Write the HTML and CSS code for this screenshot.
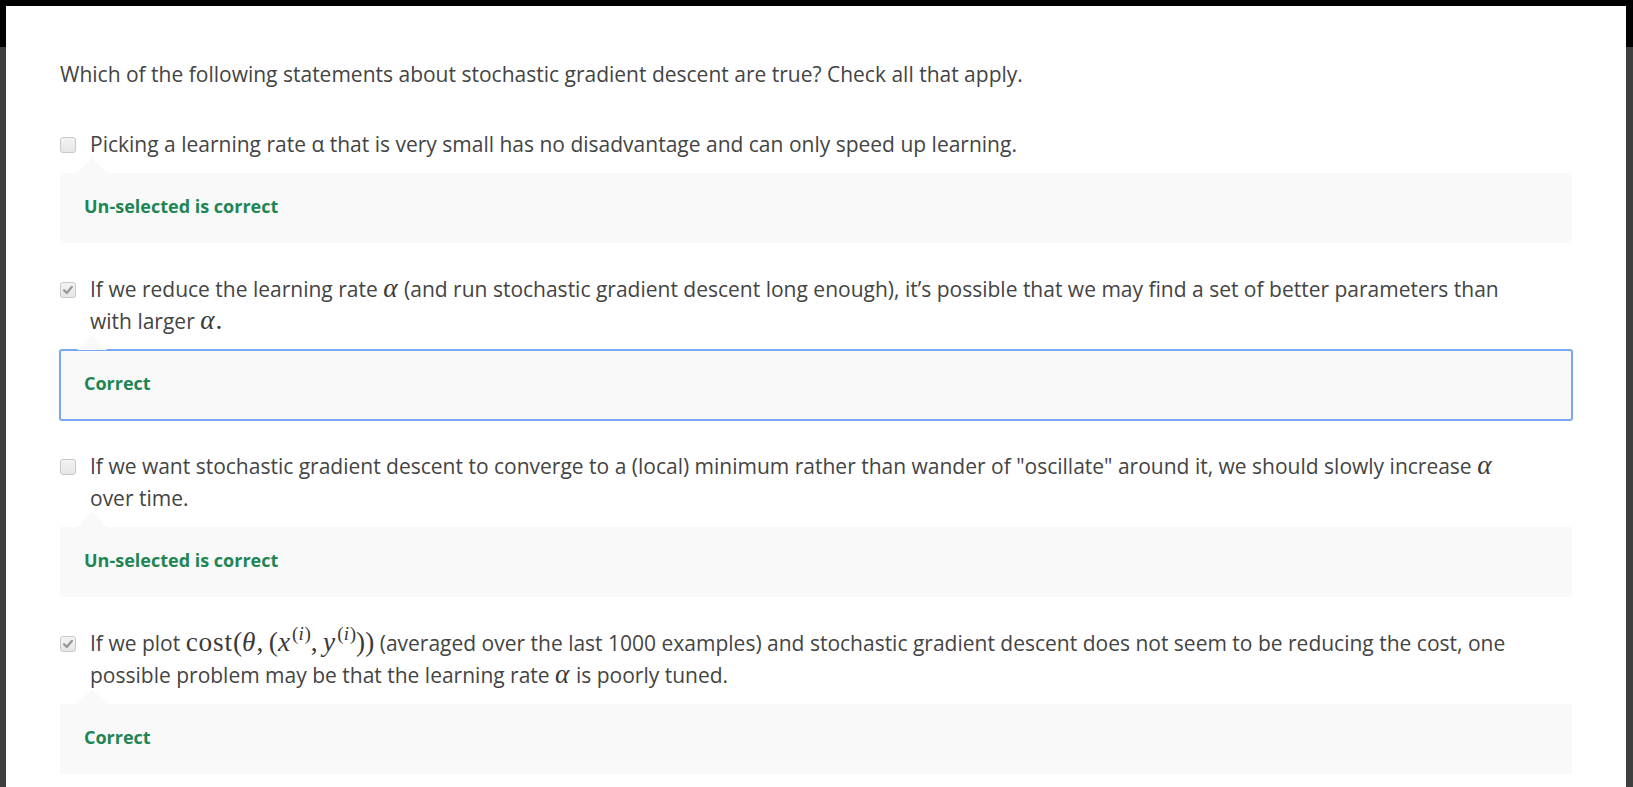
FILE: index.html
```html
<!DOCTYPE html>
<html lang="en">
<head>
<meta charset="utf-8">
<title>Quiz feedback</title>
<link rel="stylesheet" href="styles.css">
</head>
<body>
<div class="screen">
  <main class="panel">
    <p class="question">Which of the following statements about stochastic gradient descent are true? Check all that apply.</p>

    <div class="option">
      <div class="row">
        <span class="cb"></span>
        <div class="text">Picking a learning rate α that is very small has no disadvantage and can only speed up learning.</div>
      </div>
      <div class="feedback"><span class="verdict">Un-selected is correct</span></div>
    </div>

    <div class="option">
      <div class="row">
        <span class="cb checked"><svg viewBox="0 0 16 16" width="16" height="16"><path d="M4.2 8.4l2.6 2.6 5-6" stroke="#9a9a9a" stroke-width="2.4" fill="none" stroke-linecap="round" stroke-linejoin="round"/></svg></span>
        <div class="text">If we reduce the learning rate <span class="m"><i>α</i></span> (and run stochastic gradient descent long enough), it’s possible that we may find a set of better parameters than with larger <span class="m"><i>α</i>.</span></div>
      </div>
      <div class="feedback focused"><span class="verdict">Correct</span></div>
    </div>

    <div class="option">
      <div class="row">
        <span class="cb"></span>
        <div class="text">If we want stochastic gradient descent to converge to a (local) minimum rather than wander of "oscillate" around it, we should slowly increase <span class="m"><i>α</i></span> over time.</div>
      </div>
      <div class="feedback"><span class="verdict">Un-selected is correct</span></div>
    </div>

    <div class="option">
      <div class="row">
        <span class="cb checked"><svg viewBox="0 0 16 16" width="16" height="16"><path d="M4.2 8.4l2.6 2.6 5-6" stroke="#9a9a9a" stroke-width="2.4" fill="none" stroke-linecap="round" stroke-linejoin="round"/></svg></span>
        <div class="text">If we plot <span class="m"><span class="op">cost</span>(<i>θ</i>,&thinsp;(<i>x</i><sup>(<i>i</i>)</sup>,&thinsp;<i>y</i><sup>(<i>i</i>)</sup>))</span> (averaged over the last 1000 examples) and stochastic gradient descent does not seem to be reducing the cost, one possible problem may be that the learning rate <span class="m"><i>α</i></span> is poorly tuned.</div>
      </div>
      <div class="feedback"><span class="verdict">Correct</span></div>
    </div>
  </main>
</div>
</body>
</html>
```

FILE: styles.css
```css
html, body {
  margin: 0;
  padding: 0;
}

body {
  height: 787px;
  overflow: hidden;
  background: linear-gradient(#000 0, #000 47px, #3f3f3f 47px);
  font-family: "Open Sans", "Noto Sans", sans-serif;
}

.screen {
  padding: 6px 7px 0 6px;
}

.panel {
  background: #fff;
  min-height: 781px;
  padding: 53px 54px 0 54px;
  box-sizing: border-box;
}

.question {
  margin: 0 0 38px 0;
  font-size: 21px;
  line-height: 31.5px;
  color: #444;
}

.option {
  margin-bottom: 31px;
}

.row {
  display: flex;
  align-items: flex-start;
}

.cb {
  flex: none;
  width: 16px;
  height: 16px;
  margin-top: 8px;
  margin-right: 14px;
  box-sizing: border-box;
  border: 1px solid #c8c8c8;
  border-radius: 3px;
  background: linear-gradient(#f3f3f3, #e6e6e6);
  position: relative;
}

.cb svg {
  position: absolute;
  left: -1px;
  top: -1px;
}

.text {
  flex: 1;
  padding-right: 42px;
  font-size: 21px;
  line-height: 31.5px;
  color: #444;
}

.m {
  font-family: "Liberation Serif", "DejaVu Serif", serif;
  font-size: 1.3em;
  line-height: 0;
  color: #3a3a3a;
}

.m i {
  margin-right: 0.04em;
}

.m .op {
  letter-spacing: 0.03em;
}

.m sup {
  font-size: 0.7em;
  line-height: 0;
  vertical-align: 0.6em;
  margin-left: 0.05em;
}

.feedback {
  position: relative;
  margin-top: 13px;
  height: 70px;
  box-sizing: border-box;
  padding: 22px 24px 0 24px;
  background: #f9f9f9;
}

.feedback::before {
  content: "";
  position: absolute;
  left: 17px;
  top: -15px;
  border-left: 15px solid transparent;
  border-right: 15px solid transparent;
  border-bottom: 15px solid #f9f9f9;
}

.feedback.focused {
  border-radius: 2px;
  outline: 2px solid #7aa8f6;
  outline-offset: -1px;
}

.verdict {
  font-size: 18px;
  line-height: 22px;
  font-weight: 700;
  color: #1e8555;
}
```
